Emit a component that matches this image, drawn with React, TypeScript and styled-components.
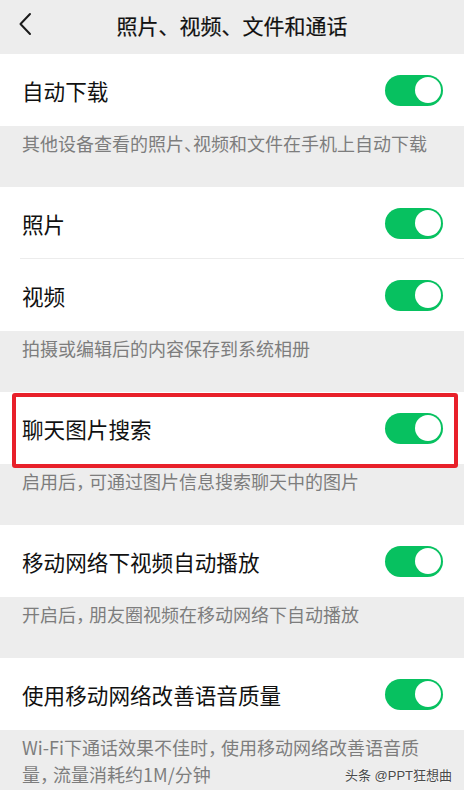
import React from 'react'
import styled, { createGlobalStyle } from 'styled-components'

const GlobalStyle = createGlobalStyle`
  html, body {
    margin: 0;
    padding: 0;
    background: #ededed;
  }
  body {
    font-family: "Noto Sans CJK SC", "Noto Sans", sans-serif;
  }
`

type Item = { label: string; on: boolean; highlight?: boolean }
type Group = { items: Item[]; note: React.ReactNode }

const groups: Group[] = [
  {
    items: [{ label: '自动下载', on: true }],
    note: '其他设备查看的照片、视频和文件在手机上自动下载',
  },
  {
    items: [
      { label: '照片', on: true },
      { label: '视频', on: true },
    ],
    note: '拍摄或编辑后的内容保存到系统相册',
  },
  {
    items: [{ label: '聊天图片搜索', on: true, highlight: true }],
    note: '启用后， 可通过图片信息搜索聊天中的图片',
  },
  {
    items: [{ label: '移动网络下视频自动播放', on: true }],
    note: '开启后， 朋友圈视频在移动网络下自动播放',
  },
  {
    items: [{ label: '使用移动网络改善语音质量', on: true }],
    note: (
      <>
        Wi-Fi下通话效果不佳时， 使用移动网络改善语音质
        <br />
        量， 流量消耗约1M/分钟
      </>
    ),
  },
]

export default function App() {
  return (
    <>
      <GlobalStyle />
      <Screen>
        <Header>
          <BackButton aria-label="返回">
            <svg width="14" height="24" viewBox="0 0 14 24" fill="none">
              <path d="M12 2 L2.5 12 L12 22" stroke="#1a1a1a" strokeWidth="2" strokeLinecap="round" strokeLinejoin="round" />
            </svg>
          </BackButton>
          <Title>照片、视频、文件和通话</Title>
        </Header>
        {groups.map((g, gi) => (
          <section key={gi}>
            <Card>
              {g.items.map((it, i) => (
                <Row key={it.label} $divider={i > 0} $highlight={it.highlight}>
                  <Label>{it.label}</Label>
                  <Toggle $on={it.on} />
                </Row>
              ))}
            </Card>
            <Note>{g.note}</Note>
          </section>
        ))}
        <Watermark>头条 @PPT狂想曲</Watermark>
      </Screen>
    </>
  )
}

const Screen = styled.div`
  position: relative;
  width: 464px;
  height: 790px;
  background: #ededed;
  overflow: hidden;
`

const Header = styled.header`
  height: 54px;
  display: flex;
  align-items: center;
  justify-content: center;
  position: relative;
  background: #ededed;
`

const BackButton = styled.div`
  position: absolute;
  left: 18px;
  top: 12px;
  width: 14px;
  height: 24px;
  display: flex;
`

const Title = styled.h1`
  margin: 0 0 5px 0;
  font-size: 21px;
  font-weight: 400;
  -webkit-text-stroke: 0.2px #111;
  color: #111;
`

const Card = styled.div`
  background: #fff;
`

const Row = styled.div<{ $divider?: boolean; $highlight?: boolean }>`
  position: relative;
  height: 72px;
  display: flex;
  align-items: center;
  justify-content: space-between;
  padding: 0 21px 0 22px;
  box-sizing: border-box;
  ${p => p.$divider && `
    &::before {
      content: '';
      position: absolute;
      top: -1px;
      left: 20px;
      right: 0;
      height: 1px;
      background: #ececec;
    }
  `}
  ${p => p.$highlight && `
    &::after {
      content: '';
      position: absolute;
      left: 12px;
      right: 6px;
      top: 1px;
      bottom: -4px;
      border: 4px solid #e8202a;
      border-radius: 3px;
      z-index: 2;
    }
  `}
`

const Label = styled.span`
  font-size: 21.6px;
  color: #111;
`

const Toggle = styled.span<{ $on: boolean }>`
  position: relative;
  width: 58px;
  height: 31px;
  border-radius: 16px;
  background: ${p => (p.$on ? '#07c160' : '#e5e5e5')};
  flex-shrink: 0;
  &::after {
    content: '';
    position: absolute;
    top: 2.5px;
    ${p => (p.$on ? 'right: 2.5px;' : 'left: 2.5px;')}
    width: 26px;
    height: 26px;
    border-radius: 50%;
    background: #fff;
  }
`

const Note = styled.div`
  padding: 4px 16px 30px 22px;
  font-size: 18px;
  line-height: 27px;
  color: #7d7d7d;
  white-space: nowrap;
  font-feature-settings: "halt";
`

const Watermark = styled.div`
  position: absolute;
  right: 12px;
  bottom: 6px;
  font-family: "Liberation Sans", "Noto Sans CJK SC", sans-serif;
  font-size: 13px;
  color: #4a4a4a;
  text-shadow: 0 0 2px #fff;
`
